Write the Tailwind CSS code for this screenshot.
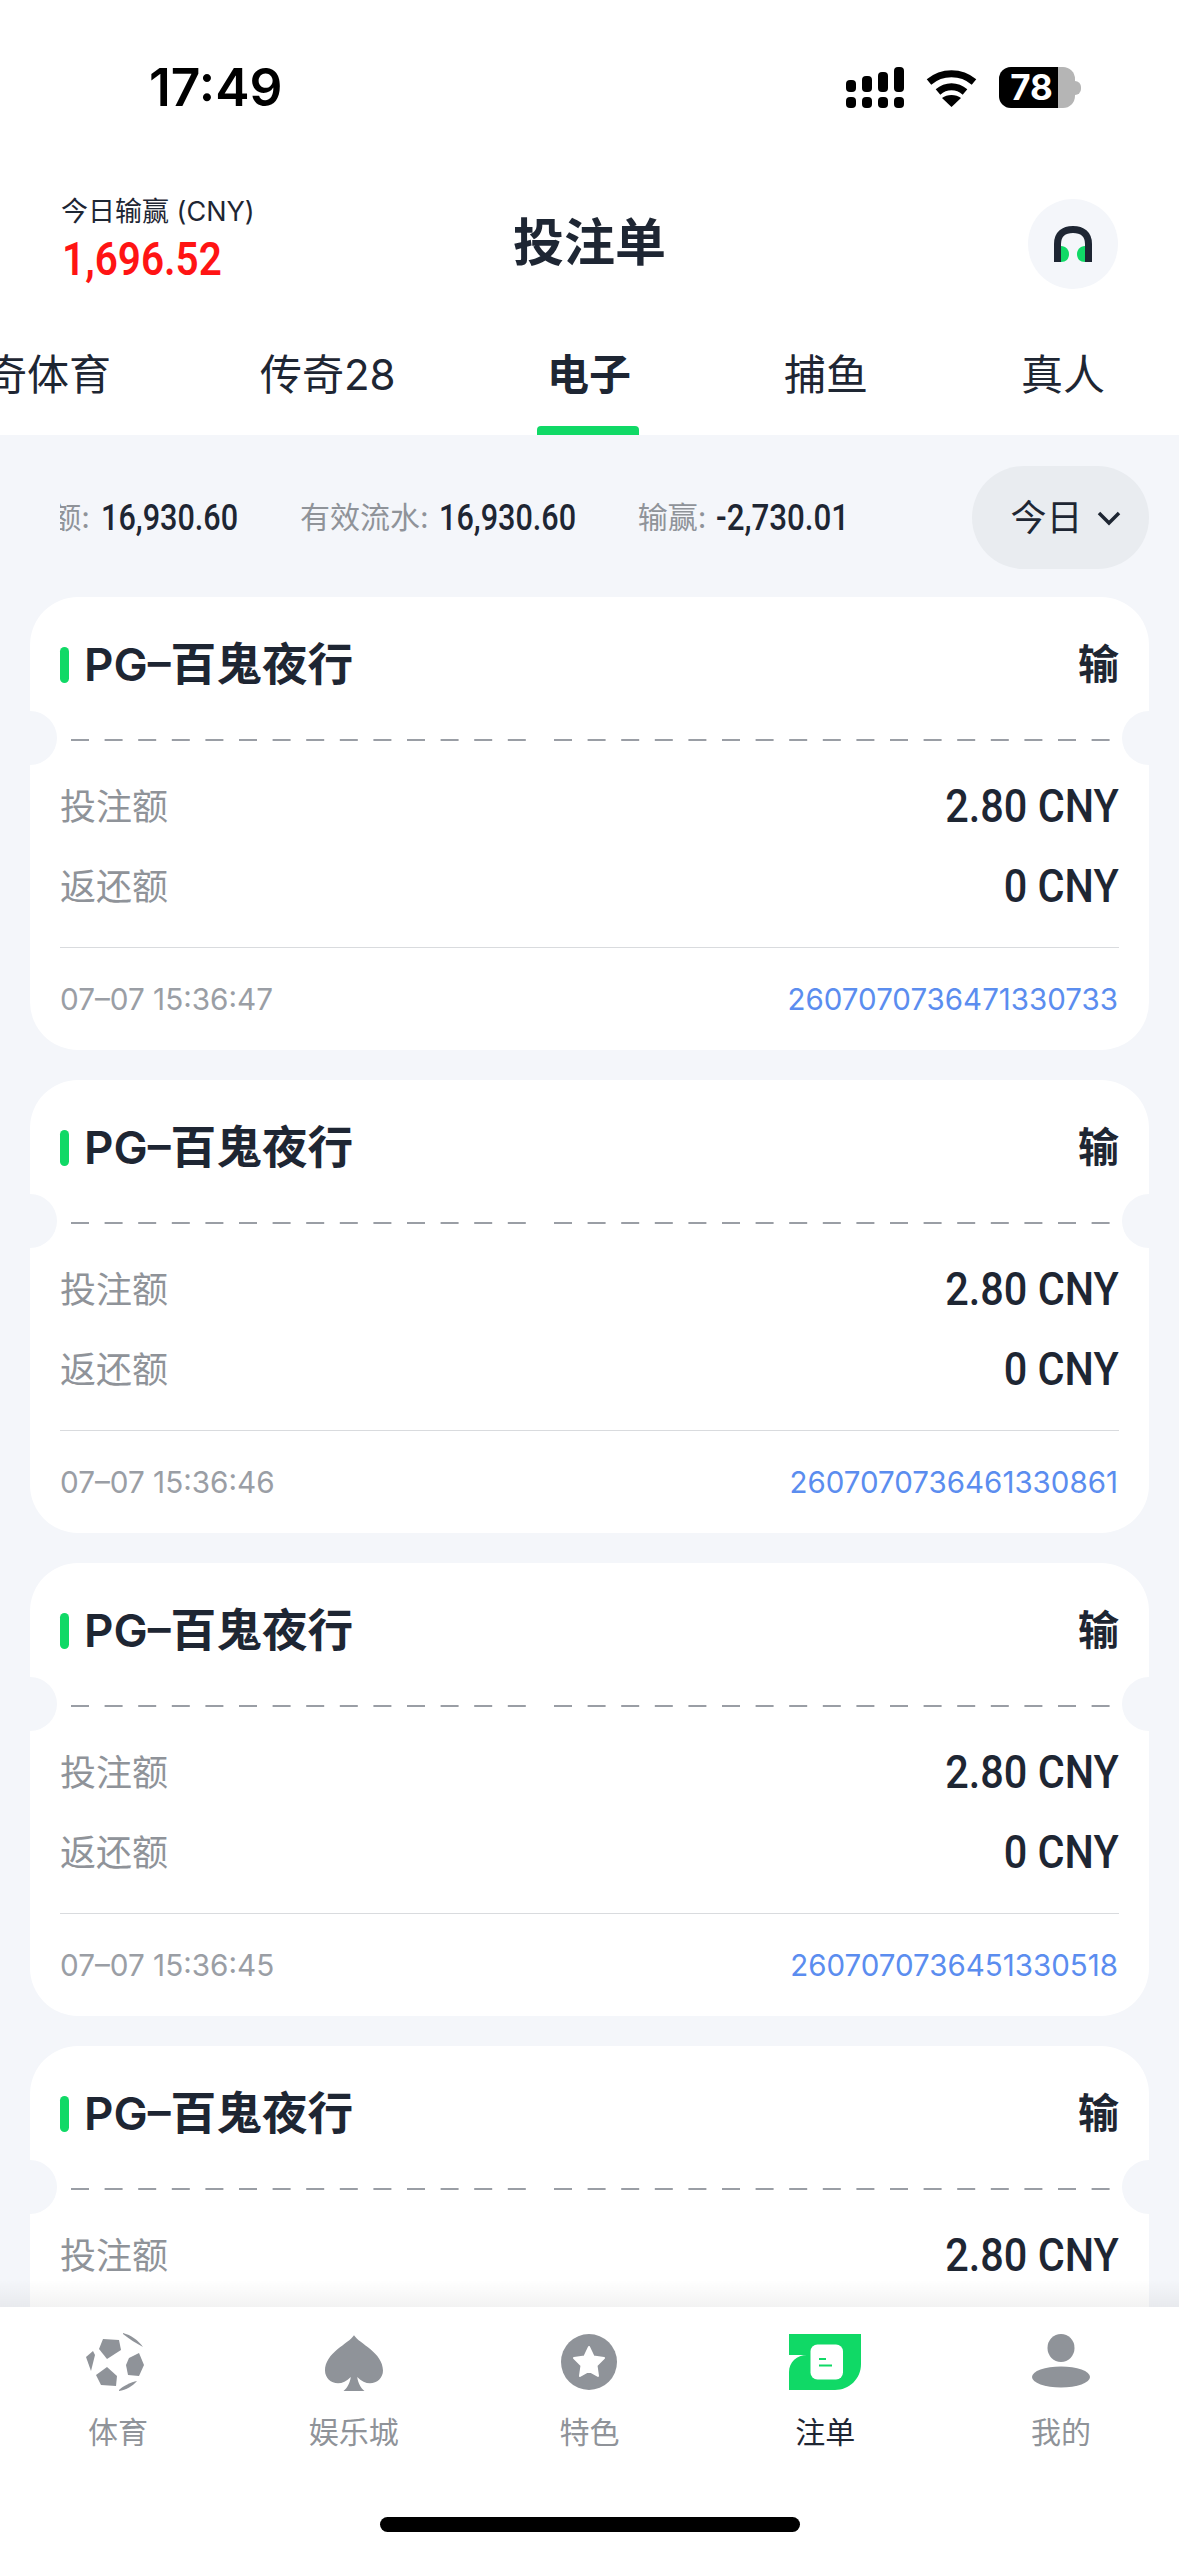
<!DOCTYPE html>
<html lang="zh-CN">
<head>
    <meta charset="UTF-8">
    <title>投注单</title>
    <script src="https://cdn.jsdelivr.net/npm/@tailwindcss/browser@4"></script>
</head>
<body class="bg-white">
    <div class="w-[1179px] h-[2556px] overflow-hidden flex flex-col bg-[#f4f6fa] text-[#1e2633] font-['Inter','Noto_Sans_CJK_SC',sans-serif]">
        <!-- Status bar -->
        <div class="h-[163px] shrink-0 bg-white flex items-start pt-[56px] pl-[149px]">
            <span class="text-[51.500px] leading-[62px] font-semibold text-black">17:49</span>
            <div class="ml-auto mr-[98px] mt-[11px] flex items-center gap-[22px]">
                <svg class="w-[58px] h-[41px]" viewBox="0 0 58 41" fill="#000">
                    <rect x="0" y="13" width="10" height="12" rx="4"/><rect x="16" y="9" width="10" height="16" rx="4"/><rect x="32" y="5" width="10" height="20" rx="4"/><rect x="48" y="0" width="10" height="25" rx="4"/>
                    <rect x="0" y="30" width="10" height="11" rx="4"/><rect x="16" y="30" width="10" height="11" rx="4"/><rect x="32" y="30" width="10" height="11" rx="4"/><rect x="48" y="30" width="10" height="11" rx="4"/>
                </svg>
                <svg class="w-[51px] h-[38px]" viewBox="0 0 51 38" fill="none" stroke="#000" stroke-width="7">
                    <path d="M3 13C16 2 35 2 48 13"/><path d="M12 23C20 16 31 16 39 23"/><path d="M25.500 38L16 29C21 25 30 25 35 29Z" fill="#000" stroke="none"/>
                </svg>
                <div class="flex items-center">
                    <div class="w-[76px] h-[41px] rounded-[12px] overflow-hidden bg-[#b5b5b5]">
                        <div class="w-[59px] h-full bg-black flex items-center justify-center text-white text-[35px] font-bold leading-none pl-[6px]">78</div>
                    </div>
                    <div class="w-[6px] h-[14px] bg-[#b5b5b5] rounded-r-full"></div>
                </div>
            </div>
        </div>
        <!-- Header -->
        <div class="relative h-[160px] shrink-0 bg-white flex items-start justify-between px-[61px]">
            <div class="pt-[32px]">
                <div class="text-[27px] leading-[34px]">今日输赢 (CNY)</div>
                <div class="mt-[4px] text-[#ff1414] text-[46px] leading-[52px] font-semibold font-['Roboto','Noto_Sans_CJK_SC',sans-serif] origin-left scale-x-[0.88] ml-[1px]">1,696.52</div>
            </div>
            <div class="absolute left-0 right-0 top-[44px] text-center text-[51px] leading-[72px] font-semibold">投注单</div>
            <div class="mt-[36px] w-[90px] h-[90px] rounded-full bg-[#f4f6fa] flex items-center justify-center">
                <svg class="w-[38px] h-[37px]" viewBox="0 0 38 37" fill="none">
                    <path d="M3.500 36V18C3.500 8 10 3.500 19 3.500C28 3.500 34.500 8 34.500 18V36" stroke="#1e2633" stroke-width="7"/>
                    <path d="M7 20C12 20 15 24 15 28C15 33 12 36 7 36Z" fill="#10d966"/>
                    <path d="M31 20C26 20 23 24 23 28C23 33 26 36 31 36Z" fill="#10d966"/>
                </svg>
            </div>
        </div>
        <!-- Tabs -->
        <div class="h-[112px] shrink-0 bg-white overflow-hidden">
            <div class="h-full flex gap-[153px] -ml-[57px] w-[1300px] text-[42px] leading-[60px] whitespace-nowrap">
                <div class="pt-[22px] w-[164px] shrink-0">传奇体育</div>
                <div class="pt-[22px] w-[134px] shrink-0">传奇28</div>
                <div class="relative pt-[22px] w-[84px] shrink-0 font-semibold">电子
                    <div class="absolute left-[-10px] bottom-0 w-[102px] h-[9px] rounded-t-[4px] bg-[#10d966]"></div>
                </div>
                <div class="pt-[22px] w-[84px] shrink-0">捕鱼</div>
                <div class="pt-[22px] w-[84px] shrink-0">真人</div>
            </div>
        </div>
        <!-- Summary row -->
        <div class="flex items-center h-[103px] shrink-0 mt-[31px]">
            <div class="ml-[60px] w-[900px] overflow-hidden">
                <div class="flex items-center whitespace-nowrap text-[30px] text-[#8f9399]">
                    <span class="w-[30px] overflow-hidden flex justify-end"><span>额:</span></span>
                    <span class="ml-[11px] w-[138px] text-[#1e2633] text-[36px] font-medium font-['Roboto',sans-serif] origin-left scale-x-[0.85]">16,930.60</span>
                    <span class="ml-[61px]">有效流水:</span>
                    <span class="ml-[10px] w-[138px] text-[#1e2633] text-[36px] font-medium font-['Roboto',sans-serif] origin-left scale-x-[0.85]">16,930.60</span>
                    <span class="ml-[61px]">输赢:</span>
                    <span class="ml-[10px] text-[#1e2633] text-[36px] font-medium font-['Roboto',sans-serif] origin-left scale-x-[0.87]">-2,730.01</span>
                </div>
            </div>
            <div class="ml-[12px] w-[177px] h-[103px] rounded-full bg-[#e9ecf0] flex items-center justify-center gap-[14px] pl-[10px] text-[36px]">
                <span>今日</span>
                <svg class="w-[24px] h-[16px]" viewBox="0 0 24 16" fill="none" stroke="#1e2633" stroke-width="3.500"><path d="M2 3L12 13L22 3"/></svg>
            </div>
        </div>
        <!-- Bet cards -->
        <div id="cards" class="flex-1 min-h-0 overflow-hidden mt-[28px] px-[30px] flex flex-col gap-[30px]"></div>
        <!-- Bottom nav -->
        <div class="relative h-[249px] shrink-0 bg-white">
            <div class="absolute left-0 right-0 -top-[27px] h-[27px] bg-gradient-to-b from-black/0 to-black/5"></div>
            <div class="grid grid-cols-5 pt-[26px]">
                <div class="flex flex-col items-center text-[#8f9399]">
                    <svg class="w-[58px] h-[58px] ml-[-6px]" viewBox="0 0 58 58" fill="#8f9399">
                        <path d="M17 6L33 7L35 17L21 26L13 16Z"/><path d="M43 25L53 20L58 32L53 43L42 42L40 32Z"/><path d="M10 42L21 34L31 43L30 53L15 52Z"/><path d="M7 18L9 22L5 38L0 24Z"/>
                        <path d="M37 0C45 2 52 7 57 14C50 10 43 6 37 1Z"/><path d="M33 57C37 53 45 49 51 48C47 53 40 57 33 58Z"/>
                    </svg>
                    <span class="mt-[20px] text-[30px] leading-[42px]">体育</span>
                </div>
                <div class="flex flex-col items-center text-[#8f9399]">
                    <svg class="w-[58px] h-[58px]" viewBox="0 -2 54 54" fill="#8f9399">
                        <path d="M27 0C22 8 0 16 0 33C0 44 14 50 24 39C23 46 20 50 16 53H38C34 50 31 46 30 39C40 50 54 44 54 33C54 16 32 8 27 0Z"/>
                    </svg>
                    <span class="mt-[20px] text-[30px] leading-[42px]">娱乐城</span>
                </div>
                <div class="flex flex-col items-center text-[#8f9399]">
                    <svg class="w-[58px] h-[58px]" viewBox="0 0 58 58">
                        <circle cx="29" cy="29" r="28" fill="#8f9399"/>
                        <path d="M29 14L33.500 23.500L44 25L36.500 32.500L38 43L29 38L20 43L21.500 32.500L14 25L24.500 23.500Z" fill="#fff" stroke="#fff" stroke-width="2" stroke-linejoin="round"/>
                    </svg>
                    <span class="mt-[20px] text-[30px] leading-[42px]">特色</span>
                </div>
                <div class="flex flex-col items-center">
                    <svg class="w-[72px] h-[56px] my-[1px]" viewBox="0 0 72 56">
                        <path d="M0 0H72V30C72 45 60 56 46 56H0V38C0 28 8 21 18 21H0Z" fill="#10d966"/>
                        <rect x="21.500" y="10.500" width="32.500" height="35" rx="7" fill="#fff"/>
                        <path d="M30 25H37M30 31.500H43" stroke="#10d966" stroke-width="2"/>
                    </svg>
                    <span class="mt-[20px] text-[30px] leading-[42px]">注单</span>
                </div>
                <div class="flex flex-col items-center text-[#8f9399]">
                    <svg class="w-[58px] h-[58px]" viewBox="0 0 58 58" fill="#8f9399">
                        <ellipse cx="29" cy="15" rx="13.500" ry="14"/><ellipse cx="29" cy="44" rx="29" ry="10.500"/>
                    </svg>
                    <span class="mt-[20px] text-[30px] leading-[42px]">我的</span>
                </div>
            </div>
            <div class="absolute left-[380px] bottom-[24px] w-[420px] h-[15px] rounded-full bg-black"></div>
        </div>
    </div>

    <script>
        const bets = [
            { time: '07–07 15:36:47', id: '2607070736471330733' },
            { time: '07–07 15:36:46', id: '2607070736461330861' },
            { time: '07–07 15:36:45', id: '2607070736451330518' },
            { time: '', id: '' }
        ];

        document.getElementById('cards').innerHTML = bets.map(bet => `
            <div class="relative h-[453px] shrink-0 rounded-[48px] bg-white overflow-hidden px-[30px]">
                <div class="absolute -left-[27px] top-[114px] w-[54px] h-[54px] rounded-full bg-[#f4f6fa]"></div>
                <div class="absolute -right-[27px] top-[114px] w-[54px] h-[54px] rounded-full bg-[#f4f6fa]"></div>
                <div class="flex items-center h-[136px]">
                    <div class="w-[9px] h-[36px] rounded-full bg-[#10d966]"></div>
                    <span class="ml-[15px] text-[45.700px] font-semibold">PG–百鬼夜行</span>
                    <span class="ml-auto text-[41px] font-semibold">输</span>
                </div>
                <svg class="block w-full h-[4px] mt-[5px]" viewBox="0 0 1059 4" fill="none" stroke="#9a9ea5" stroke-width="2" stroke-dasharray="18 15.600">
                    <line x1="11" y1="2" x2="470" y2="2"/><line x1="494" y1="2" x2="1050" y2="2"/>
                </svg>
                <div class="flex items-center justify-between h-[80px] mt-[25px]">
                    <span class="text-[36px] text-[#8f9399]">投注额</span>
                    <span class="text-[46px] leading-[60px] -mt-[2px] font-medium font-['Roboto',sans-serif] origin-right scale-x-[0.9]">2.80 CNY</span>
                </div>
                <div class="flex items-center justify-between h-[80px]">
                    <span class="text-[36px] text-[#8f9399]">返还额</span>
                    <span class="text-[46px] leading-[60px] -mt-[2px] font-medium font-['Roboto',sans-serif] origin-right scale-x-[0.9]">0 CNY</span>
                </div>
                <div class="mt-[20px] h-[1px] bg-[#d9dbde]"></div>
                <div class="flex items-center justify-between h-[102px]">
                    <span class="text-[29.700px] text-[#9a9ea5]">${bet.time}</span>
                    <span class="text-[29.500px] text-[#5b8def] mr-[1px]">${bet.id}</span>
                </div>
            </div>
        `).join('');
    </script>
</body>
</html>
